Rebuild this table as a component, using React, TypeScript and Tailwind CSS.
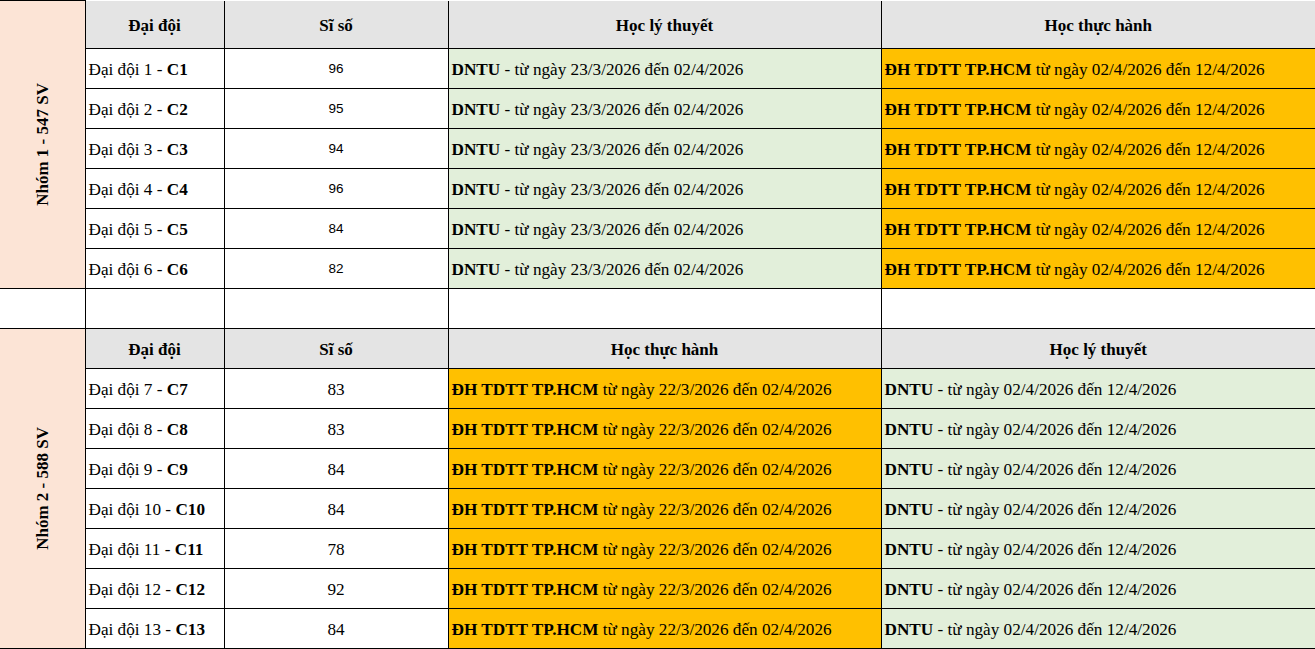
import React from 'react';

type Row = { name: string; code: string; count: number };

const group1: Row[] = [
  { name: 'Đại đội 1 - ', code: 'C1', count: 96 },
  { name: 'Đại đội 2 - ', code: 'C2', count: 95 },
  { name: 'Đại đội 3 - ', code: 'C3', count: 94 },
  { name: 'Đại đội 4 - ', code: 'C4', count: 96 },
  { name: 'Đại đội 5 - ', code: 'C5', count: 84 },
  { name: 'Đại đội 6 - ', code: 'C6', count: 82 },
];

const group2: Row[] = [
  { name: 'Đại đội 7 - ', code: 'C7', count: 83 },
  { name: 'Đại đội 8 - ', code: 'C8', count: 83 },
  { name: 'Đại đội 9 - ', code: 'C9', count: 84 },
  { name: 'Đại đội 10 - ', code: 'C10', count: 84 },
  { name: 'Đại đội 11 - ', code: 'C11', count: 78 },
  { name: 'Đại đội 12 - ', code: 'C12', count: 92 },
  { name: 'Đại đội 13 - ', code: 'C13', count: 84 },
];

const cell = 'border border-black px-[3px] pt-[2px] align-middle whitespace-nowrap';
const headCell = 'border border-black bg-[#e4e4e4] text-center font-bold text-[17px] pt-[2px]';
const green = 'bg-[#e2efda]';
const orange = 'bg-[#ffc000]';

function GroupLabel({ text, span }: { text: string; span: number }) {
  return (
    <td rowSpan={span} className="border-y border-r border-black bg-[#fce4d6] text-center align-middle pt-[8px]">
      <span className="inline-block [writing-mode:vertical-rl] rotate-180 font-bold text-[17px]">{text}</span>
    </td>
  );
}

function Header({ third, fourth }: { third: string; fourth: string }) {
  return (
    <>
      <th className={headCell}>Đại đội</th>
      <th className={headCell}>Sĩ số</th>
      <th className={headCell}>{third}</th>
      <th className={`${headCell} border-r-0`}>{fourth}</th>
    </>
  );
}

export default function App() {
  return (
    <div className="w-[1315px] h-[649px] overflow-hidden bg-white text-black font-['Liberation_Serif','Times_New_Roman',serif] text-[17.2px]">
      <table className="table-fixed border-collapse w-[1315px]">
        <colgroup>
          <col className="w-[85px]" />
          <col className="w-[139px]" />
          <col className="w-[224px]" />
          <col className="w-[433px]" />
          <col className="w-[434px]" />
        </colgroup>
        <tbody>
          {/* Nhóm 1 */}
          <tr className="h-[48px] [&>th]:border-t-0">
            <GroupLabel text="Nhóm 1 - 547 SV" span={7} />
            <Header third="Học lý thuyết" fourth="Học thực hành" />
          </tr>
          {group1.map((r) => (
            <tr key={r.code} className="h-[40px]">
              <td className={cell}>
                {r.name}
                <b>{r.code}</b>
              </td>
              <td className={`${cell} text-center font-['Liberation_Sans',Arial,sans-serif] text-[13.5px]`}>{r.count}</td>
              <td className={`${cell} ${green}`}>
                <b>DNTU</b> - từ ngày 23/3/2026 đến 02/4/2026
              </td>
              <td className={`${cell} ${orange} border-r-0`}>
                <b>ĐH TDTT TP.HCM</b> từ ngày 02/4/2026 đến 12/4/2026
              </td>
            </tr>
          ))}

          {/* dòng trống */}
          <tr className="h-[40px]">
            <td className="border-y border-r border-black" />
            <td className="border border-black" />
            <td className="border border-black" />
            <td className="border border-black" />
            <td className="border-y border-l border-black" />
          </tr>

          {/* Nhóm 2 */}
          <tr className="h-[40px]">
            <GroupLabel text="Nhóm 2 - 588 SV" span={8} />
            <Header third="Học thực hành" fourth="Học lý thuyết" />
          </tr>
          {group2.map((r) => (
            <tr key={r.code} className="h-[40px]">
              <td className={cell}>
                {r.name}
                <b>{r.code}</b>
              </td>
              <td className={`${cell} text-center`}>{r.count}</td>
              <td className={`${cell} ${orange}`}>
                <b>ĐH TDTT TP.HCM</b> từ ngày 22/3/2026 đến 02/4/2026
              </td>
              <td className={`${cell} ${green} border-r-0`}>
                <b>DNTU</b> - từ ngày 02/4/2026 đến 12/4/2026
              </td>
            </tr>
          ))}
        </tbody>
      </table>
    </div>
  );
}
